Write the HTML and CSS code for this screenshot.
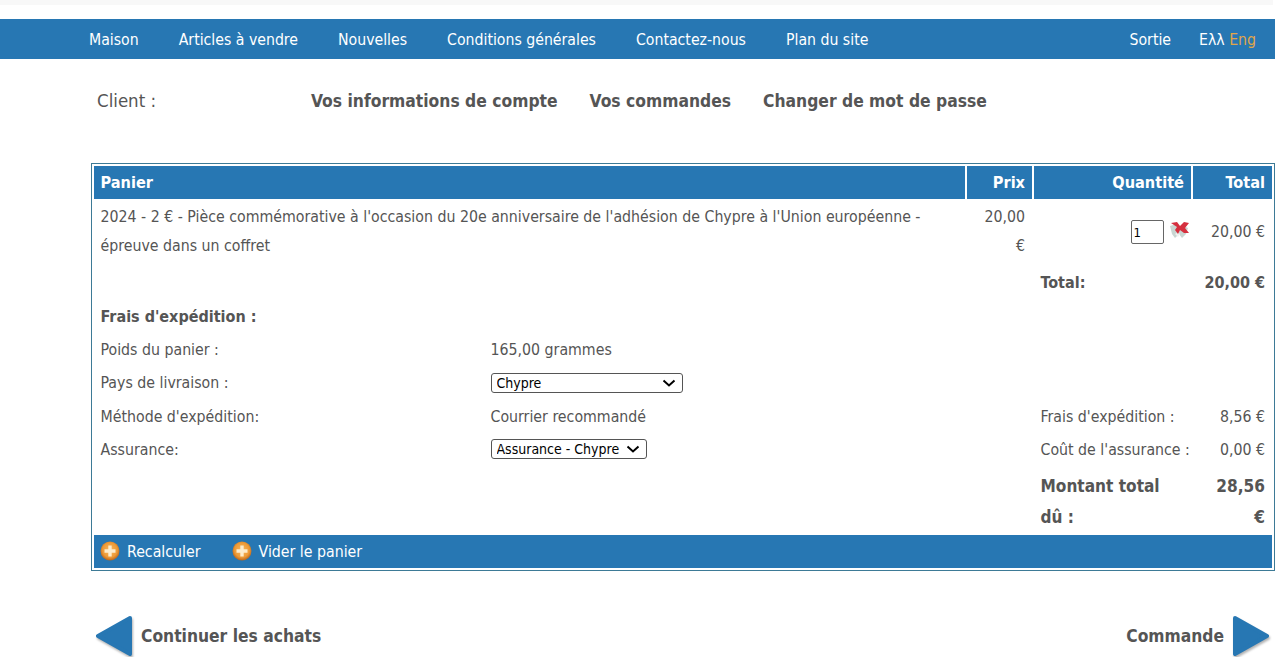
FILE: index.html
```html
<!DOCTYPE html>
<html lang="fr">
<head>
    <meta charset="UTF-8">
    <meta name="viewport" content="width=device-width, initial-scale=1.0">
    <title>Panier</title>
    <link rel="stylesheet" href="styles.css">
</head>
<body>
    <svg class="svg-defs" width="0" height="0">
        <defs>
            <radialGradient id="orange-ball" cx="50%" cy="45%" r="55%">
                <stop offset="0%" stop-color="#f9b860"/>
                <stop offset="70%" stop-color="#ed9a36"/>
                <stop offset="100%" stop-color="#b9651c"/>
            </radialGradient>
        </defs>
    </svg>

    <div class="page">
        <div class="top-strip"></div>

        <nav class="main-nav">
            <a href="#">Maison</a>
            <a href="#">Articles à vendre</a>
            <a href="#">Nouvelles</a>
            <a href="#">Conditions générales</a>
            <a href="#">Contactez-nous</a>
            <a href="#">Plan du site</a>
            <a href="#" class="logout">Sortie</a>
            <span class="lang"><a href="#">Ελλ</a> <a href="#" class="lang-active">Eng</a></span>
        </nav>

        <div class="account-bar">
            <span class="client">Client :</span>
            <a href="#">Vos informations de compte</a>
            <a href="#">Vos commandes</a>
            <a href="#">Changer de mot de passe</a>
        </div>

        <table class="cart">
            <colgroup>
                <col class="col-label">
                <col class="col-value">
                <col class="col-price">
                <col class="col-qty">
                <col class="col-total">
            </colgroup>
            <tr class="cart-head">
                <th colspan="2" class="left">Panier</th>
                <th>Prix</th>
                <th>Quantité</th>
                <th>Total</th>
            </tr>
            <tr>
                <td colspan="2">2024 - 2 € - Pièce commémorative à l'occasion du 20e anniversaire de l'adhésion de Chypre à l'Union européenne - épreuve dans un coffret</td>
                <td class="right">20,00 €</td>
                <td class="right qty-cell">
                    <input type="text" class="qty" value="1">
                    <svg class="del-icon" width="22" height="18" viewBox="0 0 22 18">
                        <path d="M2 5 L8 3 L11 6 L16 5 L20 7 L18 13 L14 17 L11 13 L7 17 L4 13 Z" fill="#c9d6d2"/>
                        <path d="M7 13 L10 16 L12 13 L10 11 Z" fill="#eef2f0"/>
                        <path d="M3 2 L9 1 L12 5 L16 1 L21 2 L17 7 L21 12 L16 12 L12 9 L10 13 L7 9 L9 6 Z" fill="#d5303f"/>
                    </svg>
                </td>
                <td class="right">20,00 €</td>
            </tr>
            <tr class="strong">
                <td colspan="3"></td>
                <td>Total:</td>
                <td class="right">20,00 €</td>
            </tr>
            <tr>
                <td colspan="5" class="section-title">Frais d'expédition :</td>
            </tr>
            <tr>
                <td>Poids du panier :</td>
                <td>165,00 grammes</td>
                <td colspan="3"></td>
            </tr>
            <tr>
                <td>Pays de livraison :</td>
                <td>
                    <select class="country"><option>Chypre</option></select>
                </td>
                <td colspan="3"></td>
            </tr>
            <tr>
                <td>Méthode d'expédition:</td>
                <td>Courrier recommandé</td>
                <td></td>
                <td>Frais d'expédition :</td>
                <td class="right">8,56 €</td>
            </tr>
            <tr>
                <td>Assurance:</td>
                <td>
                    <select class="insurance"><option>Assurance - Chypre</option></select>
                </td>
                <td></td>
                <td class="nowrap">Coût de l'assurance :</td>
                <td class="right">0,00 €</td>
            </tr>
            <tr class="grand">
                <td colspan="3"></td>
                <td>Montant total dû :</td>
                <td class="right grand-amount">28,56 €</td>
            </tr>
            <tr>
                <td colspan="5" class="cart-actions">
                    <div class="action-list">
                        <a href="#">
                            <svg width="20" height="20" viewBox="0 0 20 20">
                                <circle cx="10" cy="10" r="9.5" fill="url(#orange-ball)"/>
                                <path d="M8.3 4.5h3.4v3.8h3.8v3.4h-3.8v3.8H8.3v-3.8H4.5V8.3h3.8z" fill="#fdeccb"/>
                            </svg>
                            Recalculer
                        </a>
                        <a href="#">
                            <svg width="20" height="20" viewBox="0 0 20 20">
                                <circle cx="10" cy="10" r="9.5" fill="url(#orange-ball)"/>
                                <path d="M8.3 4.5h3.4v3.8h3.8v3.4h-3.8v3.8H8.3v-3.8H4.5V8.3h3.8z" fill="#fdeccb"/>
                            </svg>
                            Vider le panier
                        </a>
                    </div>
                </td>
            </tr>
        </table>

        <div class="cart-nav">
            <a href="#">
                <svg class="arrow" width="38" height="42" viewBox="0 0 38 42">
                    <path d="M35 3 L3 21 L35 39 Z" fill="#2777b3" stroke="#2777b3" stroke-width="4" stroke-linejoin="round"/>
                </svg>
                Continuer les achats
            </a>
            <a href="#">
                Commande
                <svg class="arrow" width="38" height="42" viewBox="0 0 38 42">
                    <path d="M3 3 L35 21 L3 39 Z" fill="#2777b3" stroke="#2777b3" stroke-width="4" stroke-linejoin="round"/>
                </svg>
            </a>
        </div>
    </div>
</body>
</html>
```

FILE: styles.css
```css
body {
    margin: 0;
    background-color: #fff;
    color: #555;
    font-family: "DejaVu Sans Condensed", "DejaVu Sans", sans-serif;
    font-size: 15.75px;
}
a {
    color: inherit;
    text-decoration: none;
}
.svg-defs {
    display: block;
}
.page {
    width: 1275px;
}
.top-strip {
    height: 5px;
    margin: 0 2px 14px 0;
    background-color: #f8f8f8;
}
.main-nav {
    display: flex;
    align-items: center;
    gap: 40px;
    height: 40px;
    padding: 0 19px 0 89px;
    background-color: #2777b3;
    color: #fff;
    font-size: 15.7px;
}
.logout {
    margin-left: auto;
}
.lang {
    margin-left: -12px;
}
.lang-active {
    color: #e0a64a;
}
.account-bar {
    display: flex;
    align-items: center;
    gap: 32px;
    height: 83px;
    padding-left: 97px;
    font-size: 17.32px;
    font-weight: bold;
}
.client {
    width: 182px;
    font-size: 18.5px;
    font-weight: normal;
}
.cart {
    width: 1184px;
    margin: 21px 0 0 91px;
    border: 1px solid #3d7a96;
    border-spacing: 2px;
    table-layout: fixed;
    line-height: 29.25px;
}
.col-label {
    width: 388px;
}
.col-value {
    width: 481px;
}
.col-price {
    width: 65px;
}
.col-qty {
    width: 157px;
}
.col-total {
    width: 79px;
}
.cart td,
.cart th {
    padding: 1px 7px 1px 6.5px;
}
.cart-head th {
    height: 33px;
    padding: 0 7px 0 6.5px;
    background-color: #2777b3;
    color: #fff;
    text-align: right;
    font-size: 16.2px;
}
.cart-head th.left {
    text-align: left;
}
.right {
    text-align: right;
}
.nowrap {
    white-space: nowrap;
}
.cart .qty-cell {
    padding-right: 1px;
}
.qty {
    width: 27px;
    height: 18px;
    margin: 0;
    padding: 2px;
    border: 1px solid #666;
    border-radius: 2px;
    color: #000;
    font-family: inherit;
    font-size: 13px;
    text-align: left;
    vertical-align: middle;
}
.del-icon {
    margin-bottom: 4px;
    vertical-align: middle;
}
.strong td,
.section-title {
    font-weight: bold;
    font-size: 16px;
}
.cart .strong td {
    padding-top: 4.25px;
    padding-bottom: 1.75px;
}
.cart .grand td {
    padding-top: 3.5px;
    padding-bottom: 0;
    font-size: 17.1px;
    font-weight: bold;
    line-height: 31px;
}
.cart .grand-amount {
    padding-left: 14px;
}
select {
    appearance: none;
    height: 20px;
    margin-bottom: 2px;
    padding: 0 20px 0 5px;
    border: 1px solid #555;
    border-radius: 3px;
    background: #fff url("data:image/svg+xml,%3Csvg xmlns='http://www.w3.org/2000/svg' width='14' height='8'%3E%3Cpath d='M1.5 1.5 L7 6.5 L12.5 1.5' fill='none' stroke='%23000' stroke-width='2'/%3E%3C/svg%3E") no-repeat right 6px center;
    color: #000;
    font-family: inherit;
    font-size: 14px;
    vertical-align: middle;
}
.country {
    width: 192px;
}
.insurance {
    width: 156px;
}
.cart .cart-actions {
    height: 33px;
    padding: 0 6px;
    background-color: #2777b3;
    color: #fff;
    line-height: 33px;
}
.action-list {
    display: flex;
    gap: 31px;
}
.action-list a {
    display: flex;
    align-items: center;
    gap: 7px;
}
.cart-nav {
    display: flex;
    justify-content: space-between;
    margin: 44px 5px 0 95px;
    font-size: 17.3px;
    font-weight: bold;
}
.cart-nav a {
    display: flex;
    align-items: center;
    gap: 8px;
}
.arrow {
    filter: drop-shadow(1px 2px 1px rgba(0, 0, 0, 0.3));
}
```
